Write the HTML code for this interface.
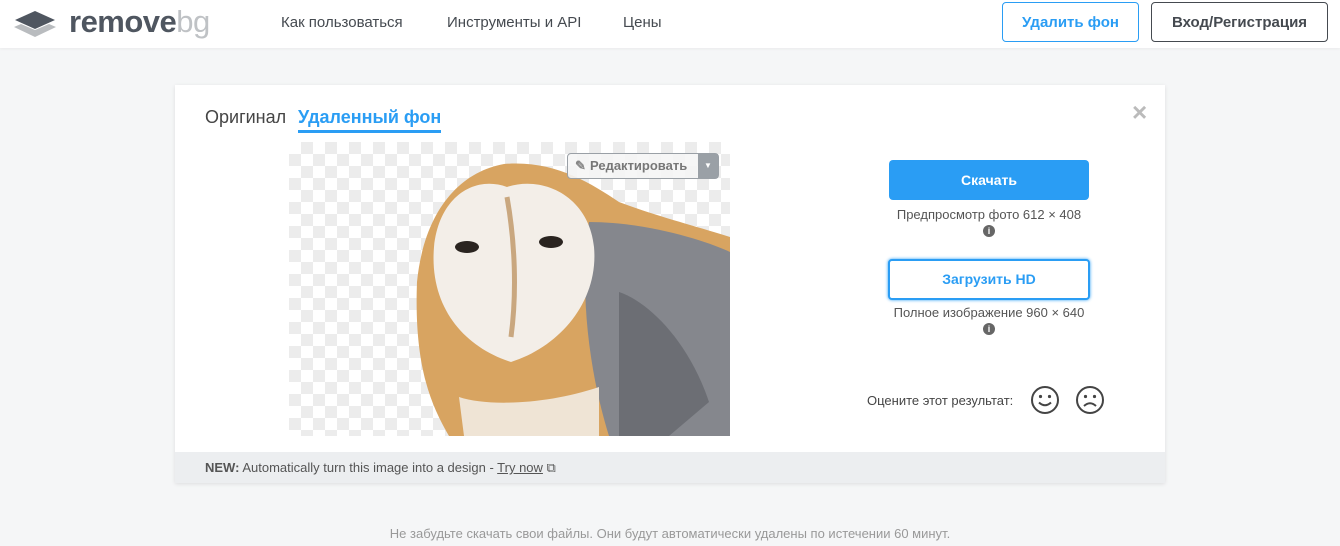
<!DOCTYPE html>
<html><head><meta charset="utf-8"><style>
*{margin:0;padding:0;box-sizing:border-box}
body{width:1340px;height:546px;background:#f5f6f7;font-family:"Liberation Sans",sans-serif;position:relative;overflow:hidden;color:#454545}
.hdr{position:absolute;left:0;top:0;width:1340px;height:48px;background:#fff;box-shadow:0 1px 3px rgba(0,0,0,.05)}
.a{position:absolute;white-space:nowrap}
.nav{font-size:15px;color:#454a50;top:14px}
.btn{position:absolute;border-radius:4px;font-size:15px;font-weight:bold;text-align:center}
.card{position:absolute;left:175px;top:85px;width:990px;height:398px;background:#fff;box-shadow:0 1px 4px rgba(0,0,0,.1)}
.strip{position:absolute;left:0;bottom:0;width:990px;height:31px;background:#eceef0;font-size:13px;color:#555;padding:8px 30px}
.chk{position:absolute;left:289px;top:142px;width:441px;height:294px;background-color:#fff;background-image:linear-gradient(45deg,#ececec 25%,transparent 25%,transparent 75%,#ececec 75%),linear-gradient(45deg,#ececec 25%,transparent 25%,transparent 75%,#ececec 75%);background-size:24px 24px;background-position:0 0,12px 12px;overflow:hidden}
.small{font-size:13px;color:#555;text-align:center}
.info{display:inline-block;width:12px;height:12px;border-radius:50%;background:#666;color:#fff;font-size:9px;font-weight:bold;line-height:12px;text-align:center}
</style></head><body>
<div class="hdr">
<svg class="a" style="left:13px;top:8px" width="44" height="32" viewBox="0 0 44 32"><path d="M1 19 L8 16 L22 22 L36 16 L43 19 L22 29Z" fill="#b9bcbf"/><path d="M2 12 L22 3 L42 12 L22 21Z" fill="#4f5660"/></svg>
<div class="a" style="left:69px;top:4px;font-size:31px;font-weight:bold;color:#4f5660;letter-spacing:-0.5px">remove<span style="color:#bfc2c5;font-weight:normal">bg</span></div>
<div class="a nav" style="left:281px">Как пользоваться</div>
<div class="a nav" style="left:447px">Инструменты и API</div>
<div class="a nav" style="left:623px">Цены</div>
<div class="btn" style="left:1002px;top:2px;width:137px;height:40px;border:1px solid #2a9df4;color:#2a9df4;line-height:40px">Удалить фон</div>
<div class="btn" style="left:1151px;top:2px;width:177px;height:40px;border:1px solid #454a50;color:#454a50;line-height:40px">Вход/Регистрация</div>
</div>
<div class="card">
<div class="a" style="left:30px;top:22px;font-size:18px;color:#454545">Оригинал</div>
<div class="a" style="left:123px;top:22px;font-size:18px;color:#2a9df4;font-weight:bold;border-bottom:3px solid #2a9df4;padding-bottom:2px">Удаленный фон</div>
<div class="a" style="left:957px;top:12px;font-size:26px;color:#bbb;font-weight:bold">×</div>
<div class="strip"><b>NEW:</b> Automatically turn this image into a design - <u>Try now</u> ⧉</div>
</div>
<div class="chk">
<svg width="441" height="294" viewBox="0 0 441 294">
<path d="M160 294 C140 260 125 220 128 140 C135 70 170 30 215 22 C265 18 300 40 330 60 C370 75 410 85 441 95 L441 294Z" fill="#d8a461"/>
<path d="M300 80 C360 80 420 100 441 110 L441 294 L320 294 C300 230 290 150 300 80Z" fill="#85878d"/>
<path d="M330 150 C360 160 400 200 420 260 L380 294 L330 294Z" fill="#6c6e74"/>
<path d="M145 105 C150 55 185 33 218 45 C255 33 300 55 305 105 C310 160 270 205 222 220 C175 205 140 165 145 105Z" fill="#f3eee8"/>
<path d="M218 55 C226 100 228 150 222 195" stroke="#c9a77f" stroke-width="5" fill="none"/>
<ellipse cx="178" cy="105" rx="12" ry="6" fill="#2a2420"/><ellipse cx="262" cy="100" rx="12" ry="6" fill="#2a2420"/>
<path d="M170 255 C200 265 260 262 310 245 L310 294 L175 294Z" fill="#efe4d5"/>
</svg>
</div>
<div class="a" style="left:567px;top:153px;width:152px;height:26px;border:1px solid #9aa0a6;border-radius:4px;background:rgba(245,245,245,.9);font-size:13px;font-weight:bold;color:#777;line-height:24px;padding-left:22px">Редактировать<span style="position:absolute;right:0;top:0;width:20px;height:24px;background:#9aa0a6;color:#fff;font-size:8px;text-align:center">▼</span><span style="position:absolute;left:7px;top:0;color:#888">✎</span></div>
<div class="btn" style="left:889px;top:160px;width:200px;height:40px;background:#2a9df4;color:#fff;line-height:40px;font-size:14px">Скачать</div>
<div class="a small" style="left:839px;top:207px;width:300px">Предпросмотр фото 612 × 408<br><span class="info">i</span></div>
<div class="btn" style="left:888px;top:259px;width:202px;height:41px;border:2px solid #2a9df4;box-shadow:0 0 3px #2a9df4;color:#2a9df4;line-height:37px;font-size:14px;background:#fff">Загрузить HD</div>
<div class="a small" style="left:839px;top:305px;width:300px">Полное изображение 960 × 640<br><span class="info">i</span></div>
<div class="a" style="left:867px;top:393px;font-size:13px;color:#454545">Оцените этот результат:</div>
<svg class="a" style="left:1030px;top:385px" width="30" height="30" viewBox="0 0 30 30"><circle cx="15" cy="15" r="13" fill="none" stroke="#444" stroke-width="2"/><circle cx="10.5" cy="11.5" r="1.6" fill="#444"/><circle cx="19.5" cy="11.5" r="1.6" fill="#444"/><path d="M9 17.5 Q15 23 21 17.5" fill="none" stroke="#444" stroke-width="2"/></svg>
<svg class="a" style="left:1075px;top:385px" width="30" height="30" viewBox="0 0 30 30"><circle cx="15" cy="15" r="13" fill="none" stroke="#444" stroke-width="2"/><circle cx="10.5" cy="11.5" r="1.6" fill="#444"/><circle cx="19.5" cy="11.5" r="1.6" fill="#444"/><path d="M9 21 Q15 15.5 21 21" fill="none" stroke="#444" stroke-width="2"/></svg>
<div class="a" style="left:0;width:1340px;top:526px;text-align:center;font-size:13px;color:#999">Не забудьте скачать свои файлы. Они будут автоматически удалены по истечении 60 минут.</div>
</body></html>
